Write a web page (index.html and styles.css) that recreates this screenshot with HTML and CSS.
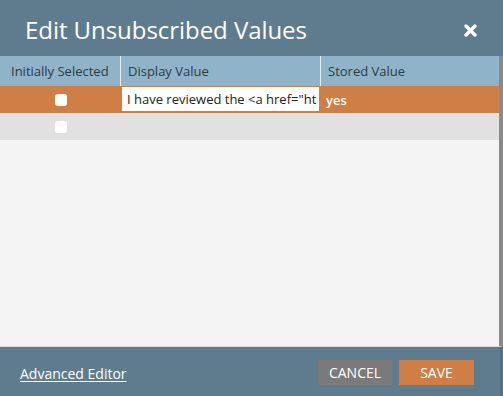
FILE: index.html
```html
<!DOCTYPE html>
<html>
<head>
<meta charset="utf-8">
<link rel="stylesheet" href="styles.css">
</head>
<body>
<div class="dialog">
  <div class="titlebar">
    <h1 class="title">Edit Unsubscribed Values</h1>
    <span class="close" aria-label="Close">
      <svg width="13" height="13" viewBox="0 0 13 13"><path d="M2 2 L11 11 M11 2 L2 11" stroke="#fff" stroke-width="3.4" stroke-linecap="round"/></svg>
    </span>
  </div>
  <div class="content">
    <div class="grid">
      <div class="row head">
        <div class="cell c1">Initially Selected</div>
        <div class="cell c2">Display Value</div>
        <div class="cell c3">Stored Value</div>
      </div>
      <div class="row selected">
        <div class="cell c1 center"><span class="check"></span></div>
        <div class="cell c2 editing"><div class="input">I have reviewed the &lt;a href="ht</div></div>
        <div class="cell c3 value">yes</div>
      </div>
      <div class="row plain">
        <div class="cell c1 center"><span class="check"></span></div>
        <div class="cell c2"></div>
        <div class="cell c3"></div>
      </div>
    </div>
  </div>
  <div class="footer">
    <a class="adv" href="#">Advanced Editor</a>
    <div class="buttons">
      <button class="btn cancel">CANCEL</button>
      <button class="btn save">SAVE</button>
    </div>
  </div>
</div>
</body>
</html>
```
FILE: styles.css
```css
html, body {
  margin: 0;
  padding: 0;
}
body {
  font-family: "Open Sans", "Liberation Sans", sans-serif;
  width: 503px;
  height: 396px;
  overflow: hidden;
  background: #5e7c8e;
}
.dialog {
  display: flex;
  flex-direction: column;
  height: 396px;
}
.titlebar {
  height: 56px;
  background: #5e7c8e;
  display: flex;
  align-items: center;
  justify-content: space-between;
  padding: 0 26px 0 25px;
  box-sizing: border-box;
}
.title {
  margin: 0;
  font-weight: 400;
  font-size: 24px;
  color: #fff;
  letter-spacing: -0.05px;
  padding-top: 2px;
}
.close {
  display: flex;
  width: 13px;
  height: 13px;
  margin-top: 4px;
}
.content {
  height: 291px;
  background: #f4f4f4;
  border-right: 4px solid #8a8a8a;
  border-bottom: 1px solid #d8d8d8;
  box-sizing: border-box;
}
.row {
  display: grid;
  grid-template-columns: 120px 200px 179px;
}
.cell {
  box-sizing: border-box;
  font-size: 13px;
  display: flex;
  align-items: center;
}
.head {
  height: 30px;
  background: #8fb3c9;
  color: #2e3b44;
}
.head .cell {
  padding-left: 11px;
  padding-top: 0;
}
.head .c2, .head .c3 {
  border-left: 1px solid #e3edf3;
  padding-left: 7px;
}
.selected {
  height: 27px;
  background: #cf7f45;
}
.plain {
  height: 27px;
  background: #e1e1e1;
}
.center {
  justify-content: center;
}
.check {
  display: block;
  width: 12px;
  height: 12px;
  background: #fff;
  border-radius: 3px;
  margin-left: 1px;
}
.editing {
  padding: 1px 1px 2px 2px;
}
.input {
  background: #fff;
  height: 24px;
  width: 100%;
  box-sizing: border-box;
  padding-left: 5px;
  display: flex;
  align-items: center;
  color: #222;
  white-space: nowrap;
  overflow: hidden;
  font-size: 13px;
}
.value {
  color: #fff;
  font-weight: 600;
  padding-left: 6px;
}
.footer {
  flex: 1;
  display: flex;
  align-items: center;
  justify-content: space-between;
  padding: 0 26px 0 20px;
  border-right: 3px solid #56717f;
}
.adv {
  color: #fff;
  font-size: 14px;
  text-decoration: underline;
  text-underline-offset: 2px;
  margin-top: 3px;
}
.buttons {
  display: flex;
  gap: 7px;
  margin-top: 2px;
}
.btn {
  border: 0;
  font-family: inherit;
  color: #fff;
  font-size: 14px;
  height: 25px;
  padding: 0;
  cursor: pointer;
}
.cancel {
  width: 74px;
  background: #7a7a7a;
}
.save {
  width: 75px;
  background: #cf7f45;
}
```
